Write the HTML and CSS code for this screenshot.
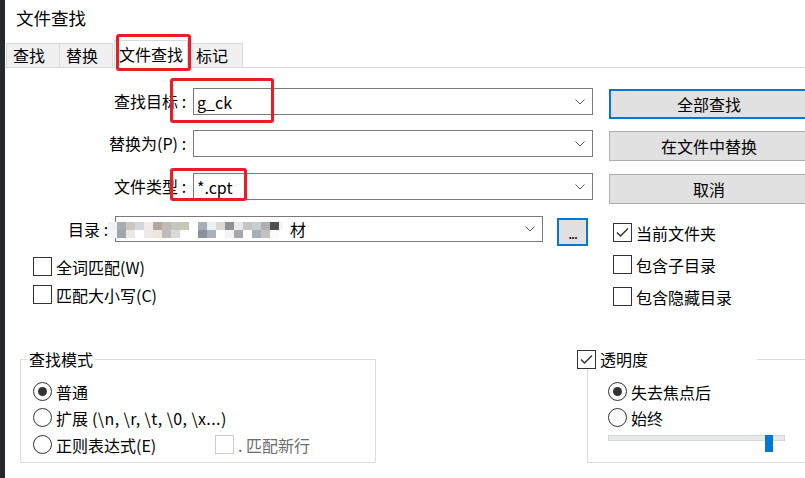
FILE: index.html
```html
<!DOCTYPE html>
<html lang="zh-CN">
<head>
	<meta charset="UTF-8">
	<title>文件查找</title>
	<link rel="stylesheet" href="styles.css">
</head>
<body>

	<!-- Left window edge -->
	<div class="edge"></div>

	<div class="dialog">
		<div class="title">文件查找</div>

		<!-- Tabs -->
		<div class="tabs">
			<div class="tab">查找</div>
			<div class="tab">替换</div>
			<div class="tab active">文件查找</div>
			<div class="tab">标记</div>
		</div>

		<div class="panel">
			<div class="top">
				<!-- Form fields -->
				<div class="form">
					<div class="row">
						<div class="label">查找目标<span class="colon">:</span></div>
						<div class="combo"><span>g_ck</span>
							<svg class="chev" width="10" height="6" viewBox="0 0 10 6"><polyline points="0.5,0.5 5,5 9.5,0.5" /></svg>
						</div>
					</div>
					<div class="row r2">
						<div class="label">替换为(P)<span class="colon">:</span></div>
						<div class="combo"><span></span>
							<svg class="chev" width="10" height="6" viewBox="0 0 10 6"><polyline points="0.5,0.5 5,5 9.5,0.5" /></svg>
						</div>
					</div>
					<div class="row r3">
						<div class="label">文件类型<span class="colon">:</span></div>
						<div class="combo"><span>*.cpt</span>
							<svg class="chev" width="10" height="6" viewBox="0 0 10 6"><polyline points="0.5,0.5 5,5 9.5,0.5" /></svg>
						</div>
					</div>
					<div class="row dir-row">
						<div class="label dir-label">目录<span class="colon">:</span></div>
						<div class="combo dir-combo"><span>材</span>
							<svg class="chev" width="10" height="6" viewBox="0 0 10 6"><polyline points="0.5,0.5 5,5 9.5,0.5" /></svg>
						</div>
						<div class="browse">...</div>
						<!-- blurred path -->
						<div class="mosaic"></div>
					</div>

					<div class="check left-check first">
						<span class="box"></span>全词匹配(W)
					</div>
					<div class="check left-check">
						<span class="box"></span>匹配大小写(C)
					</div>
				</div>

				<!-- Buttons and folder options -->
				<div class="side">
					<div class="btn default">全部查找</div>
					<div class="btn b2">在文件中替换</div>
					<div class="btn b3">取消</div>

					<div class="check right-check first">
						<span class="box"><svg width="17" height="17" viewBox="0 0 17 17"><polyline points="3,8.5 6.5,12 14,4.5" /></svg></span>当前文件夹
					</div>
					<div class="check right-check">
						<span class="box"></span>包含子目录
					</div>
					<div class="check right-check">
						<span class="box"></span>包含隐藏目录
					</div>
				</div>
			</div>

			<div class="groups">
				<fieldset class="group mode">
					<legend>查找模式</legend>
					<div class="radio"><span class="dot on"></span>普通</div>
					<div class="radio r-2"><span class="dot"></span>扩展 <span class="esc">(\n, \r, \t, \0, \x...)</span></div>
					<div class="radio r-3">
						<span class="dot"></span><span class="regex">正则表达式(E)</span>
						<span class="box disabled"></span><span class="muted">. 匹配新行</span>
					</div>
				</fieldset>

				<fieldset class="group opacity">
					<legend>
						<span class="box"><svg width="17" height="17" viewBox="0 0 17 17"><polyline points="3,8.5 6.5,12 14,4.5" /></svg></span>透明度
					</legend>
					<div class="radio"><span class="dot on"></span>失去焦点后</div>
					<div class="radio r-2"><span class="dot"></span>始终</div>
					<div class="slider">
						<div class="track"></div>
						<div class="thumb"></div>
					</div>
				</fieldset>
			</div>
		</div>
	</div>

	<!-- Red annotation boxes -->
	<div class="mark mark-tab"></div>
	<div class="mark mark-target"></div>
	<div class="mark mark-type"></div>

</body>
</html>
```

FILE: styles.css
```css
/* Global */
* {
	box-sizing: border-box;
}

body {
	margin: 0;
	width: 805px;
	height: 478px;
	overflow: hidden;
	display: flex;
	background: #fff;
	color: #000;
	font-family: "Noto Sans CJK SC", sans-serif;
	font-size: 16px;
}

.edge {
	flex: none;
	width: 5px;
	background: #232a2e;
}

.dialog {
	flex: 1;
	min-width: 0;
}

.title {
	height: 38px;
	line-height: 36px;
	padding-left: 11px;
	font-size: 17.5px;
}

/* Tabs */
.tabs {
	display: flex;
	align-items: flex-end;
	height: 30px;
	padding-left: 1px;
	border-bottom: 1px solid #d9d9d9;
}

.tab {
	height: 24px;
	line-height: 22px;
	padding: 0 14px 0 6px;
	margin-right: -1px;
	background: #f0f0f0;
	border: 1px solid #d9d9d9;
	border-bottom: none;
}

.tab.active {
	position: relative;
	height: 28px;
	line-height: 26px;
	margin: 0 1px -1px 2px;
	padding: 0 4px;
	background: #fff;
}

/* Upper area */
.top {
	display: flex;
}

.form {
	flex: none;
	width: 588px;
	padding-top: 20px;
}

.row {
	display: flex;
	align-items: flex-start;
}

.r2 {
	margin-top: 15px;
}

.r3 {
	margin-top: 16px;
}

.label {
	width: 185px;
	margin-right: 3px;
	text-align: right;
	line-height: 27px;
	white-space: nowrap;
}

.colon {
	display: inline-block;
	width: 12px;
	text-align: center;
}

.combo {
	width: 400px;
	height: 27px;
	padding: 0 7px 0 3px;
	display: flex;
	align-items: center;
	justify-content: space-between;
	border: 1px solid #7a7a7a;
	background: #fff;
}

.chev polyline {
	fill: none;
	stroke: #5a5a5a;
	stroke-width: 1;
}

/* Directory row */
.dir-row {
	position: relative;
	margin-top: 16px;
}

.dir-label {
	width: 107px;
	line-height: 26px;
}

.dir-combo {
	width: 428px;
	height: 26px;
	padding-left: 174px;
}

.browse {
	width: 31px;
	height: 28px;
	margin: 2px 0 0 14px;
	background: #e1e1e1;
	border: 2px solid #0078d7;
	text-align: center;
	font-size: 14px;
	line-height: 26px;
	letter-spacing: -1px;
}

.mosaic {
	position: absolute;
	left: 103px;
	top: 6px;
	width: 175px;
	height: 16px;
	background:
		linear-gradient(to right,
			#eef2f5 0 9px, #a7acb3 9px 18px, #cdc5c0 18px 27px, #d5d5df 27px 36px,
			#efebe8 36px 45px, #b3a69e 45px 54px, #c0bab7 54px 63px, #c3c7be 63px 72px,
			#c6c9b3 72px 81px, #fff 81px 90px, #a6aeb6 90px 99px, #eaf0f2 99px 108px,
			#dbd7d3 108px 117px, #8f9094 117px 126px, #e9e9e6 126px 135px, #c5c5c5 135px 144px,
			#c6ced2 144px 153px, #afafb3 153px 162px, #4f4f4f 162px 171px, #f4f4f4 171px) top / 100% 8px no-repeat,
		linear-gradient(to right,
			#f3f4f6 0 9px, #a0a5ab 9px 18px, #ebe7e3 18px 27px, #fff 27px 36px,
			#ede9e6 36px 45px, #efe6de 45px 54px, #c0bcb9 54px 63px, #d9d9d9 63px 72px,
			#fff 72px 81px, #fff 81px 90px, #8c9199 90px 99px, #a9b1b9 99px 108px,
			#fff 108px 117px, #f3f3f3 117px 126px, #a8a8ac 126px 135px, #fff 135px 144px,
			#a6b0b8 144px 153px, #c2c2c2 153px 162px, #fafafa 162px 171px, #fff 171px) bottom / 100% 8px no-repeat;
}

/* Checkboxes */
.check {
	display: flex;
	align-items: center;
	height: 19px;
	white-space: nowrap;
}

.box {
	flex: none;
	width: 19px;
	height: 19px;
	margin-right: 4px;
	border: 1px solid #333;
	background: #fff;
}

.box svg {
	display: block;
}

.box polyline {
	fill: none;
	stroke: #333;
	stroke-width: 1.5;
}

.left-check {
	margin: 9px 0 0 28px;
}

.left-check.first {
	margin-top: 11px;
}

/* Right column */
.side {
	flex: none;
	width: 200px;
	margin-left: 16px;
	padding-top: 21px;
}

.btn {
	width: 200px;
	height: 30px;
	background: #e1e1e1;
	border: 1px solid #adadad;
	text-align: center;
	line-height: 28px;
}

.btn.default {
	border: 2px solid #0078d7;
	line-height: 26px;
}

.b2 {
	margin-top: 12px;
}

.b3 {
	margin-top: 13px;
}

.right-check {
	margin: 13px 0 0 4px;
}

.right-check.first {
	margin-top: 19px;
}

/* Group boxes */
.groups {
	display: flex;
	margin-top: 43px;
}

.group {
	flex: none;
	height: 114px;
	margin: 0;
	border: 1px solid #dcdcdc;
	min-width: 0;
}

.group legend {
	line-height: 20px;
	padding: 0 2px;
}

.mode {
	width: 356px;
	margin-left: 15px;
	padding: 13px 0 0 12px;
}

.mode legend {
	margin-left: -6px;
}

.opacity {
	width: 240px;
	margin-left: 211px;
	padding: 13px 0 0 20px;
}

.opacity legend {
	display: flex;
	align-items: center;
	width: 180px;
	margin-left: -31px;
	padding: 0;
	background: #fff;
}

.radio {
	display: flex;
	align-items: center;
	height: 19px;
	white-space: nowrap;
}

.esc {
	margin-left: 4px;
	letter-spacing: 0.4px;
}

.r-2 {
	margin-top: 7px;
}

.r-3 {
	margin-top: 8px;
}

.dot {
	flex: none;
	width: 19px;
	height: 19px;
	margin-right: 4px;
	display: flex;
	align-items: center;
	justify-content: center;
	border: 1px solid #333;
	border-radius: 50%;
}

.dot.on::after {
	content: "";
	width: 9px;
	height: 9px;
	border-radius: 50%;
	background: #333;
}

.regex {
	width: 159px;
}

.box.disabled {
	border-color: #cccccc;
}

.muted {
	color: #6d6d6d;
}

/* Slider */
.slider {
	position: relative;
	width: 177px;
	height: 17px;
	margin-top: 8px;
}

.track {
	height: 6px;
	margin-top: 6px;
	background: #e7eaea;
	border: 1px solid #d6d6d6;
}

.thumb {
	position: absolute;
	left: 157px;
	top: 0;
	width: 8px;
	height: 17px;
	background: #0078d7;
}

/* Annotation boxes */
.mark {
	position: absolute;
	border: 3px solid #ec1c24;
	border-radius: 3px;
}

.mark-tab {
	left: 116px;
	top: 34px;
	width: 75px;
	height: 37px;
}

.mark-target {
	left: 170px;
	top: 78px;
	width: 104px;
	height: 45px;
}

.mark-type {
	left: 170px;
	top: 168px;
	width: 77px;
	height: 33px;
}
```
